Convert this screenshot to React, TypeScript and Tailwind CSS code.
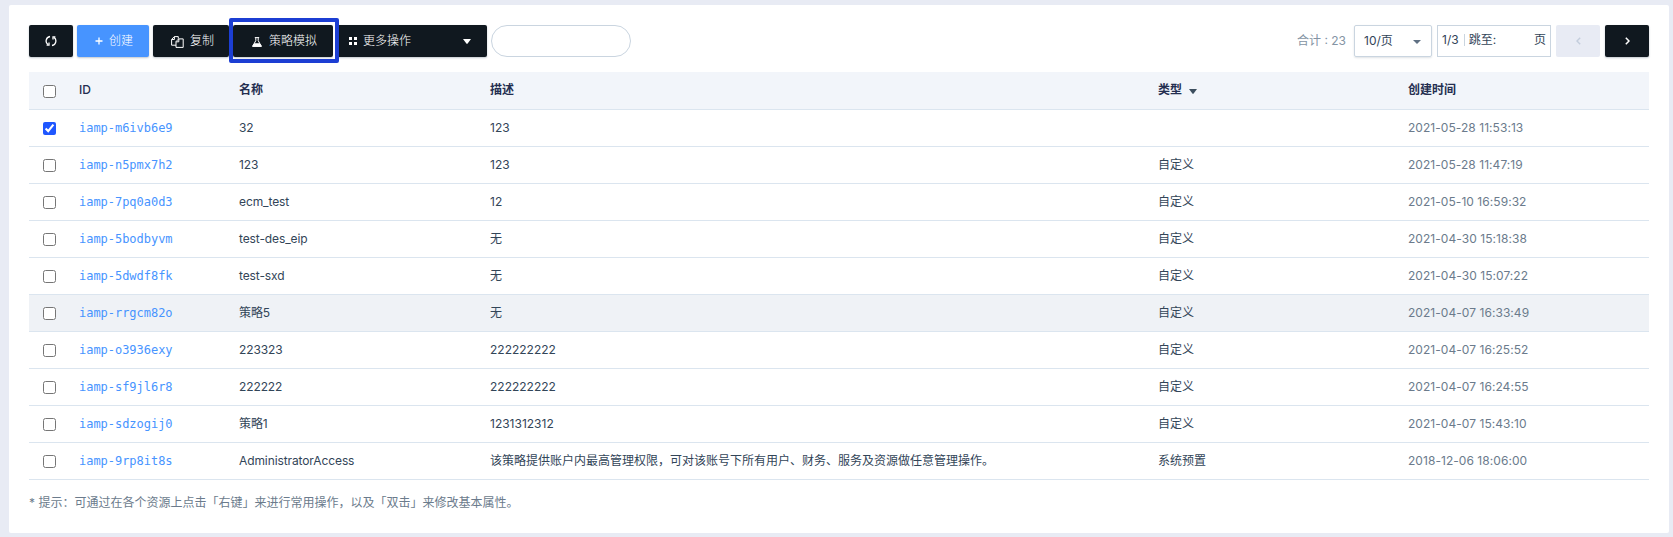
import React from 'react';

type Row = { id: string; name: string; desc: string; type: string; time: string };

const rows: Row[] = [
  { id: 'iamp-m6ivb6e9', name: '32', desc: '123', type: '', time: '2021-05-28 11:53:13' },
  { id: 'iamp-n5pmx7h2', name: '123', desc: '123', type: '自定义', time: '2021-05-28 11:47:19' },
  { id: 'iamp-7pq0a0d3', name: 'ecm_test', desc: '12', type: '自定义', time: '2021-05-10 16:59:32' },
  { id: 'iamp-5bodbyvm', name: 'test-des_eip', desc: '无', type: '自定义', time: '2021-04-30 15:18:38' },
  { id: 'iamp-5dwdf8fk', name: 'test-sxd', desc: '无', type: '自定义', time: '2021-04-30 15:07:22' },
  { id: 'iamp-rrgcm82o', name: '策略5', desc: '无', type: '自定义', time: '2021-04-07 16:33:49' },
  { id: 'iamp-o3936exy', name: '223323', desc: '222222222', type: '自定义', time: '2021-04-07 16:25:52' },
  { id: 'iamp-sf9jl6r8', name: '222222', desc: '222222222', type: '自定义', time: '2021-04-07 16:24:55' },
  { id: 'iamp-sdzogij0', name: '策略1', desc: '1231312312', type: '自定义', time: '2021-04-07 15:43:10' },
  {
    id: 'iamp-9rp8it8s',
    name: 'AdministratorAccess',
    desc: '该策略提供账户内最高管理权限，可对该账号下所有用户、财务、服务及资源做任意管理操作。',
    type: '系统预置',
    time: '2018-12-06 18:06:00',
  },
];

const HOVERED = 5;
const grid = 'grid grid-cols-[50px_160px_251px_668px_250px_1fr] items-center border-b border-[#dbe5ef]';

function Caret({ className }: { className: string }) {
  return (
    <svg viewBox="0 0 8 5" width="8" height="5" className={className} fill="currentColor">
      <path d="M0 0h8L4.6 4.6a.8.8 0 0 1-1.2 0z" />
    </svg>
  );
}

function Check({ checked, className = '' }: { checked?: boolean; className?: string }) {
  return (
    <input
      type="checkbox"
      defaultChecked={checked}
      className={`m-0 ml-[14px] block h-[13px] w-[13px] accent-[#1f57ff] ${className}`}
    />
  );
}

const btn = 'flex h-8 items-center rounded-[2px] bg-[#10181f] font-light text-white shadow-[0_1px_2px_rgba(50,69,88,0.3)]';

export default function App() {
  return (
    <div className="h-[537px] w-[1673px] bg-[#e8ebf4] pb-1 pl-[9px] pr-1 pt-[5px] font-['Inter','Noto_Sans_CJK_SC',sans-serif] text-[12px] leading-5 text-[#324558]">
      <div className="flex h-full flex-col rounded-[2px] bg-white px-5 pt-5">
        <div className="flex h-8 items-center">
          <button className={`${btn} w-11 justify-center`}>
            <svg width="12" height="12" viewBox="0 0 12 12" fill="none" stroke="currentColor" strokeWidth="1.3">
              <path d="M5 1.5A4.5 4.5 0 0 0 3 9.6M7 10.5A4.5 4.5 0 0 0 9 2.4" />
              <path d="M1.6 10.2H4V7.6M10.4 1.8H8V4.4" />
            </svg>
          </button>
          <button className="ml-1 flex h-8 w-[72px] items-center rounded-[2px] bg-[#4794ff] pl-[18px] font-light text-white shadow-[0_1px_2px_rgba(50,69,88,0.3)]">
            <svg width="8" height="8" viewBox="0 0 8 8" fill="none" stroke="currentColor" strokeWidth="1.3">
              <path d="M4 .5v7M.5 4h7" />
            </svg>
            <span className="ml-[6px]">创建</span>
          </button>
          <button className={`${btn} ml-1 w-[76px] pl-[18px]`}>
            <svg width="13" height="12" viewBox="0 0 13 12" className="mt-[2px]" fill="none" stroke="currentColor" strokeWidth="1">
              <path d="M5 9.2H.6V3.4L3.3.6h4v2.2M3.4.8v2.7H.8M5 5.6l2.7-2.7h4.5v8.5H5zM7.8 3v2.8H5.2" />
            </svg>
            <span className="ml-[6px]">复制</span>
          </button>
          <div className="relative ml-1">
            <button className={`${btn} w-[100px] pl-[19px]`}>
              <svg width="10" height="10" viewBox="0 0 10 10" className="mt-[2px]" fill="none" stroke="currentColor" strokeWidth="1">
                <path d="M2.8.6h4.4M3.8.6v3L.7 9.3h8.6L6.2 3.6v-3" />
                <path d="M2.2 6.8h5.6l1.5 2.5H.7z" fill="currentColor" />
              </svg>
              <span className="ml-[7px]">策略模拟</span>
            </button>
            <div className="pointer-events-none absolute -left-1 -top-[7px] z-10 h-[45px] w-[110px] rounded-[2px] border-4 border-[#1c3ed3]" />
            <div className="pointer-events-none absolute -top-[3px] left-[100px] h-[37px] w-[3px] bg-white" />
          </div>
          <button className={`${btn} ml-1 w-[150px] pl-3`}>
            <svg width="8" height="8" viewBox="0 0 8 8" fill="currentColor">
              <path d="M0 0h3v3H0zM5 0h3v3H5zM0 5h3v3H0zM5 5h3v3H5z" />
            </svg>
            <span className="ml-[6px]">更多操作</span>
            <Caret className="ml-auto mr-4 mt-px" />
          </button>
          <input className="ml-1 h-8 w-[140px] rounded-full border border-[#cad5e0] bg-white px-3 outline-none" />
          <span className="ml-auto text-[#8494a4]">合计 : 23</span>
          <div className="ml-2 flex h-8 w-[78px] items-center rounded-[2px] border border-[#cad5e0] pl-[9px] pr-[10px] shadow-[0_1px_2px_rgba(50,69,88,0.15)]">
            <span>10/页</span>
            <svg viewBox="0 0 8 4" width="8" height="4" className="ml-auto mt-[2px] text-[#5f7083]" fill="currentColor">
              <path d="M0 0h8L4 4z" />
            </svg>
          </div>
          <div className="ml-[5px] flex h-8 w-[114px] items-center border border-[#cad5e0] px-1 pb-[2px]">
            <span>1/3</span>
            <span className="ml-[5px] mr-1 h-3 w-px bg-[#cad5e0]" />
            <span>跳至:</span>
            <span className="ml-auto">页</span>
          </div>
          <button className="ml-[5px] flex h-8 w-11 items-center justify-center rounded-[2px] bg-[#e8ebf4] text-[#c3cddc]">
            <svg width="5" height="8" viewBox="0 0 5 8" fill="none" stroke="currentColor" strokeWidth="1.4">
              <path d="M4.2.8 1 4l3.2 3.2" />
            </svg>
          </button>
          <button className={`${btn} ml-[5px] w-11 justify-center`}>
            <svg width="5" height="8" viewBox="0 0 5 8" fill="none" stroke="currentColor" strokeWidth="1.5">
              <path d="M.8.8 4 4 .8 7.2" />
            </svg>
          </button>
        </div>

        <div className={`${grid} mt-[15px] h-[38px] bg-[#f2f5fa] font-bold text-[#242e50]`}>
          <Check className="mt-px" />
          <span className="pb-[2px] font-medium">ID</span>
          <span className="pb-[2px]">名称</span>
          <span className="pb-[2px]">描述</span>
          <span className="flex items-center pb-[2px]">
            类型
            <Caret className="ml-[7px] mt-[3px] text-[#3c4e5e]" />
          </span>
          <span className="pb-[2px]">创建时间</span>
        </div>
        {rows.map((r, i) => (
          <div key={r.id} className={`${grid} h-[37px] ${i === HOVERED ? 'bg-[#eff2f6]' : ''}`}>
            <Check checked={i === 0} />
            <a className="font-['DejaVu_Sans_Mono',monospace] tracking-[-0.03px] text-[#4794ff]">{r.id}</a>
            <span className="tracking-[-0.1px]">{r.name}</span>
            <span className="whitespace-nowrap">{r.desc}</span>
            <span>{r.type}</span>
            <span className="tracking-[0.05px] text-[#6b7b8c]">{r.time}</span>
          </div>
        ))}
        <p className="mt-[13px] text-[#6b7b8c]">* 提示：可通过在各个资源上点击「右键」来进行常用操作，以及「双击」来修改基本属性。</p>
      </div>
    </div>
  );
}
